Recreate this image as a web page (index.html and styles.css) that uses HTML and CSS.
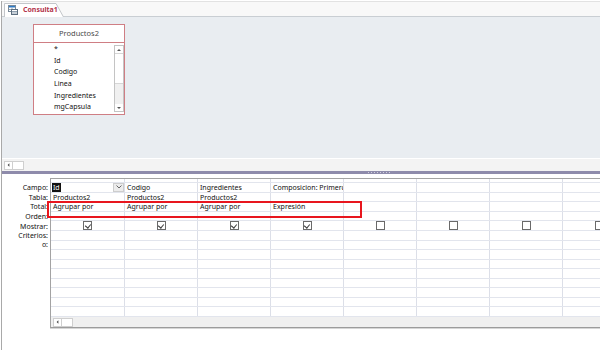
FILE: index.html
```html
<!DOCTYPE html>
<html lang="es">
<head>
    <meta charset="UTF-8">
    <title>Consulta1</title>
    <link rel="stylesheet" href="styles.css">
</head>
<body>
    <div class="window">
        <div class="tabbar">
            <div class="tab">
                <svg class="tab-shape" width="60" height="14" viewBox="0 0 60 14">
                    <path d="M0.5 14 V0.5 H52 L59.5 14" fill="#fff" stroke="#c3c6ca"/>
                </svg>
                <svg class="tab-icon" width="10" height="10" viewBox="0 0 10 10">
                    <rect x="0.5" y="0.5" width="7" height="6" fill="#fff" stroke="#7a8a99"/>
                    <rect x="1" y="1" width="6" height="1.5" fill="#2f7bc6"/>
                    <path d="M1 4.5 H7 M4 2.5 V6.5" stroke="#9aa7b3"/>
                    <rect x="3.5" y="4.5" width="6" height="5" fill="#fff" stroke="#5d6f80"/>
                    <path d="M4 6.5 H9 M4 8 H9" stroke="#8fa0b0"/>
                </svg>
                <span class="tab-title">Consulta1</span>
            </div>
        </div>

        <div class="design">
            <div class="table-box">
                <div class="table-title">Productos2</div>
                <div class="table-body">
                    <ul class="field-list">
                        <li>*</li>
                        <li>Id</li>
                        <li>Codigo</li>
                        <li>Linea</li>
                        <li>Ingredientes</li>
                        <li>mgCapsula</li>
                    </ul>
                    <div class="vscroll">
                        <div class="vs-btn">
                            <svg width="8" height="6" viewBox="0 0 8 6"><path d="M2 4 L4 2 L6 4 Z" fill="#555"/></svg>
                        </div>
                        <div class="vs-thumb"></div>
                        <div class="vs-track"></div>
                        <div class="vs-btn">
                            <svg width="8" height="6" viewBox="0 0 8 6"><path d="M2 2 L4 4 L6 2 Z" fill="#555"/></svg>
                        </div>
                    </div>
                </div>
            </div>
        </div>

        <div class="hscroll">
            <div class="hs-btn">
                <svg width="8" height="8" viewBox="0 0 8 8"><path d="M5 2 L3 4 L5 6 Z" fill="#444"/></svg>
            </div>
            <div class="hs-thumb"></div>
        </div>

        <div class="splitter"><span class="grip"></span></div>

        <div class="qbe">
            <div class="labels">
                <div>Campo:</div>
                <div>Tabla:</div>
                <div>Total:</div>
                <div>Orden:</div>
                <div class="tall">Mostrar:</div>
                <div>Criterios:</div>
                <div>o:</div>
            </div>

            <div class="grid-wrap">
                <div class="grid">
                    <div class="row sel-row">
                        <div class="cell"></div><div class="cell"></div><div class="cell"></div><div class="cell"></div>
                        <div class="cell"></div><div class="cell"></div><div class="cell"></div><div class="cell"></div>
                    </div>
                    <div class="row">
                        <div class="cell field-cell">
                            <span class="selected">Id</span>
                            <span class="dropdown">
                                <svg width="8" height="6" viewBox="0 0 8 6"><path d="M1.5 1.5 L4 4 L6.5 1.5" fill="none" stroke="#666"/></svg>
                            </span>
                        </div>
                        <div class="cell">Codigo</div>
                        <div class="cell">Ingredientes</div>
                        <div class="cell">Composicion: Primerc</div>
                        <div class="cell"></div><div class="cell"></div><div class="cell"></div><div class="cell"></div>
                    </div>
                    <div class="row">
                        <div class="cell">Productos2</div>
                        <div class="cell">Productos2</div>
                        <div class="cell">Productos2</div>
                        <div class="cell"></div>
                        <div class="cell"></div><div class="cell"></div><div class="cell"></div><div class="cell"></div>
                    </div>
                    <div class="row">
                        <div class="cell">Agrupar por</div>
                        <div class="cell">Agrupar por</div>
                        <div class="cell">Agrupar por</div>
                        <div class="cell">Expresión</div>
                        <div class="cell"></div><div class="cell"></div><div class="cell"></div><div class="cell"></div>
                    </div>
                    <div class="row">
                        <div class="cell"></div><div class="cell"></div><div class="cell"></div><div class="cell"></div>
                        <div class="cell"></div><div class="cell"></div><div class="cell"></div><div class="cell"></div>
                    </div>
                    <div class="row show-row">
                        <div class="cell"><span class="check on"></span></div>
                        <div class="cell"><span class="check on"></span></div>
                        <div class="cell"><span class="check on"></span></div>
                        <div class="cell"><span class="check on"></span></div>
                        <div class="cell"><span class="check"></span></div>
                        <div class="cell"><span class="check"></span></div>
                        <div class="cell"><span class="check"></span></div>
                        <div class="cell"><span class="check"></span></div>
                    </div>
                    <div class="row empty"></div>
                    <div class="row empty"></div>
                    <div class="row empty"></div>
                    <div class="row empty"></div>
                    <div class="row empty"></div>
                    <div class="row empty"></div>
                    <div class="row empty"></div>
                    <div class="row empty"></div>
                    <div class="row empty"></div>
                </div>
                <div class="grid-scroll">
                    <div class="hs-btn">
                        <svg width="8" height="8" viewBox="0 0 8 8"><path d="M5 2 L3 4 L5 6 Z" fill="#444"/></svg>
                    </div>
                    <div class="hs-thumb"></div>
                </div>
            </div>

            <div class="highlight"></div>
        </div>
    </div>

    <script>
        // empty rows still need their column lines
        document.querySelectorAll(".row.empty").forEach(function(row) {
            for (let i = 0; i < 8; i++) {
                const cell = document.createElement("div");
                cell.className = "cell";
                row.appendChild(cell);
            }
        });
    </script>
</body>
</html>
```

FILE: styles.css
```css
body {
    margin: 0;
    width: 600px;
    height: 350px;
    overflow: hidden;
    background: #fff;
    font-family: "Noto Sans", Arial, sans-serif;
    font-size: 7px;
    color: #111;
}
.window {
    margin-left: 1px;
    border-left: 1px solid #a9a9a9;
    height: 350px;
}

/* tab strip */
.tabbar {
    box-sizing: border-box;
    height: 16px;
    margin-top: 1px;
    border-top: 1px solid #e2e2e2;
    border-bottom: 1px solid #c9ced3;
    background: #f8f8f8;
    display: flex;
    align-items: flex-start;
}
.tab {
    position: relative;
    margin: 1px 0 0 2px;
    width: 60px;
    height: 14px;
    display: flex;
    align-items: center;
}
.tab-shape {
    position: absolute;
    left: 0;
    top: 0;
}
.tab-icon {
    position: relative;
    margin-left: 4px;
}
.tab-title {
    position: relative;
    margin-left: 5px;
    font-weight: bold;
    color: #b3344b;
    line-height: 14px;
}

/* table design area */
.design {
    height: 141px;
    background: #e9edf1;
    padding: 7px 0 0 31px;
    box-sizing: border-box;
}
.table-box {
    width: 92px;
    box-sizing: border-box;
    border: 1px solid #cf7e84;
    background: #fff;
}
.table-title {
    height: 17px;
    line-height: 17px;
    border-bottom: 1px solid #cf7e84;
    text-align: center;
    font-size: 7.5px;
    color: #4a4a4a;
}
.table-body {
    display: flex;
    height: 71px;
}
.field-list {
    flex: 1;
    list-style: none;
    margin: 0;
    padding: 0 0 0 20px;
}
.field-list li {
    height: 11.7px;
    line-height: 11.7px;
}
.vscroll {
    width: 10px;
    margin: 2px 0;
    box-sizing: border-box;
    border: 1px solid #c4c4c4;
    display: flex;
    flex-direction: column;
}
.vs-btn {
    height: 7px;
    display: flex;
    align-items: center;
    justify-content: center;
    background: #fff;
}
.vs-thumb {
    height: 29px;
    background: #fff;
    border-top: 1px solid #d6d6d6;
    border-bottom: 1px solid #d6d6d6;
}
.vs-track {
    flex: 1;
    background: #f0f0f0;
}

/* scrollbars */
.hscroll {
    height: 12px;
    border-top: 1px solid #fff;
    background: #f3f3f3;
    display: flex;
    align-items: center;
    padding-left: 2px;
}
.hs-btn {
    width: 9px;
    height: 9px;
    box-sizing: border-box;
    border: 1px solid #cfcfcf;
    background: #fff;
    display: flex;
    align-items: center;
    justify-content: center;
}
.hs-thumb {
    width: 11px;
    height: 9px;
    box-sizing: border-box;
    border: 1px solid #cfcfcf;
    border-left: none;
    background: #fff;
}

.splitter {
    height: 3px;
    background: #8e8bab;
    margin-bottom: 4px;
    display: flex;
    align-items: center;
}
.grip {
    margin-left: 366px;
    width: 24px;
    height: 1px;
    background: repeating-linear-gradient(90deg, #d2d0df 0 1px, transparent 1px 3px);
}

/* query grid */
.qbe {
    position: relative;
    display: flex;
}
.labels {
    width: 48px;
    padding: 5px 2px 0 0;
    box-sizing: border-box;
    text-align: right;
}
.labels div {
    height: 9.5px;
    line-height: 10px;
}
.labels .tall {
    line-height: 11px;
}
.grid-wrap {
    flex: 1;
    border-top: 1px solid #a3a3a3;
    border-left: 1px solid #a3a3a3;
    border-bottom: 1px solid #9c9c9c;
    box-shadow: 0 1px 0 #d6d6d6;
    overflow: hidden;
}
.grid {
    width: 620px;
}
.row {
    display: grid;
    grid-template-columns: 74px repeat(7, 73px);
    height: 9.5px;
    box-sizing: border-box;
    border-bottom: 1px solid #e2e5ed;
}
.sel-row {
    height: 4px;
}
.cell {
    border-right: 1px solid #dcdfe8;
    padding-left: 2px;
    line-height: 9px;
    white-space: nowrap;
    overflow: hidden;
}
.field-cell {
    display: flex;
    justify-content: space-between;
    padding-left: 1px;
}
.selected {
    background: #111;
    color: #fff;
    padding: 0 1px;
    height: 8.5px;
}
.dropdown {
    width: 11px;
    height: 8.5px;
    box-sizing: border-box;
    border: 1px solid #cdcdcd;
    background: #ececec;
    display: flex;
    align-items: center;
    justify-content: center;
}
.show-row {
    height: 10px;
}
.show-row .cell {
    display: flex;
    align-items: center;
    justify-content: center;
    padding-left: 0;
}
.check {
    width: 9px;
    height: 9px;
    box-sizing: border-box;
    border: 1px solid #6a6a6a;
    background: #fff;
    position: relative;
}
.check.on::after {
    content: "";
    position: absolute;
    left: 1.5px;
    top: 0.5px;
    width: 3px;
    height: 4px;
    border-right: 1px solid #3a3a3a;
    border-bottom: 1px solid #3a3a3a;
    transform: rotate(40deg);
}
.grid-scroll {
    height: 10px;
    margin-top: 0.5px;
    background: #f0f0f0;
    display: flex;
    align-items: center;
    padding-left: 2px;
}
.highlight {
    position: absolute;
    left: 45px;
    top: 23px;
    width: 315px;
    height: 17px;
    box-sizing: border-box;
    border: 2px solid #e8161e;
}
```
